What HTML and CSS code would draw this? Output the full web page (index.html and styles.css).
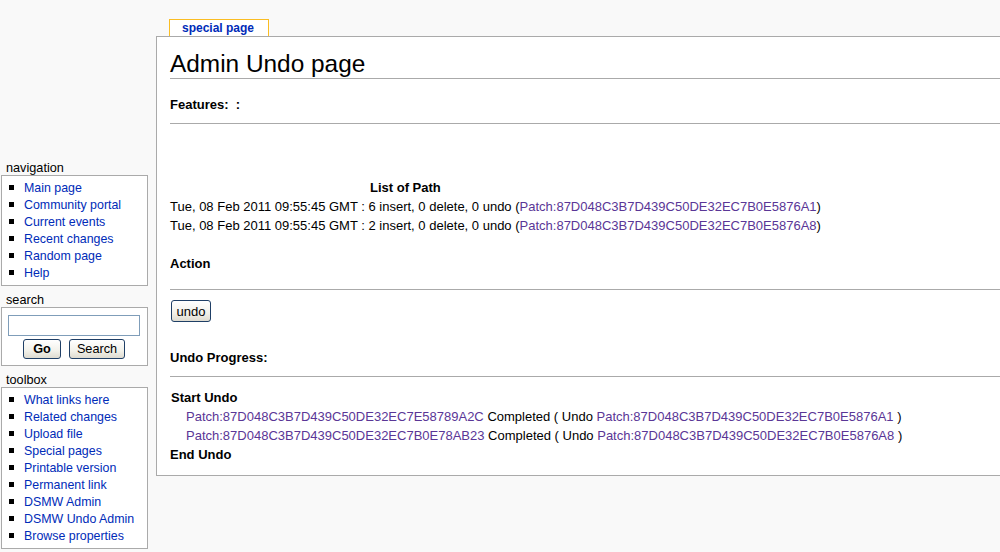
FILE: index.html
```html
<!DOCTYPE html>
<html>
<head>
<meta charset="utf-8">
<title>Admin Undo page</title>
<link rel="stylesheet" href="styles.css">
</head>
<body>
<div class="page">
  <div class="sidebar">
    <div class="portlet">
      <h5>navigation</h5>
      <div class="pbody">
        <ul>
          <li><a href="#">Main page</a></li>
          <li><a href="#">Community portal</a></li>
          <li><a href="#">Current events</a></li>
          <li><a href="#">Recent changes</a></li>
          <li><a href="#">Random page</a></li>
          <li><a href="#">Help</a></li>
        </ul>
      </div>
    </div>
    <div class="portlet">
      <h5>search</h5>
      <div class="pbody search">
        <input class="search-input" type="text">
        <div class="search-buttons">
          <button class="btn btn-go">Go</button>
          <button class="btn btn-search">Search</button>
        </div>
      </div>
    </div>
    <div class="portlet">
      <h5>toolbox</h5>
      <div class="pbody">
        <ul>
          <li><a href="#">What links here</a></li>
          <li><a href="#">Related changes</a></li>
          <li><a href="#">Upload file</a></li>
          <li><a href="#">Special pages</a></li>
          <li><a href="#">Printable version</a></li>
          <li><a href="#">Permanent link</a></li>
          <li><a href="#">DSMW Admin</a></li>
          <li><a href="#">DSMW Undo Admin</a></li>
          <li><a href="#">Browse properties</a></li>
        </ul>
      </div>
    </div>
  </div>
  <div class="main">
    <div class="tabs"><a class="tab" href="#">special page</a></div>
    <div class="content">
      <h1 class="title">Admin Undo page</h1>
      <div class="features">Features:&nbsp; :</div>
      <div class="rule rule-features"></div>
      <div class="list-caption">List of Path</div>
      <div class="row">Tue, 08 Feb 2011 09:55:45 GMT : 6 insert, 0 delete, 0 undo (<a class="v" href="#">Patch:87D048C3B7D439C50DE32EC7B0E5876A1</a>)</div>
      <div class="row">Tue, 08 Feb 2011 09:55:45 GMT : 2 insert, 0 delete, 0 undo (<a class="v" href="#">Patch:87D048C3B7D439C50DE32EC7B0E5876A8</a>)</div>
      <div class="section action">Action</div>
      <div class="rule rule-action"></div>
      <button class="btn undo-btn">undo</button>
      <div class="section progress">Undo Progress:</div>
      <div class="rule rule-progress"></div>
      <div class="start">Start Undo</div>
      <div class="item"><a class="v" href="#">Patch:87D048C3B7D439C50DE32EC7E58789A2C</a> Completed ( Undo <a class="v" href="#">Patch:87D048C3B7D439C50DE32EC7B0E5876A1</a> )</div>
      <div class="item"><a class="v" href="#">Patch:87D048C3B7D439C50DE32EC7B0E78AB23</a> Completed ( Undo <a class="v" href="#">Patch:87D048C3B7D439C50DE32EC7B0E5876A8</a> )</div>
      <div class="end">End Undo</div>
    </div>
  </div>
</div>
</body>
</html>
```

FILE: styles.css
```css
html, body {
  margin: 0;
  padding: 0;
  background: #f9f9f9;
  overflow: hidden;
}
body {
  font-family: "Liberation Sans", Arial, sans-serif;
  font-size: 12.7px;
  color: #000;
}
a {
  color: #002bb8;
  text-decoration: none;
}
a.v {
  color: #5a3696;
}
.page {
  display: flex;
  align-items: flex-start;
  width: 1000px;
}
.sidebar {
  width: 156px;
  flex: none;
  padding-top: 160px;
  font-size: 12.4px;
}
.portlet {
  margin: 0 0 6px 1px;
  width: 147px;
}
.portlet h5 {
  margin: 0;
  padding: 1px 0 0 5px;
  font-size: 12.7px;
  font-weight: normal;
  line-height: 15px;
  height: 14px;
  color: #000;
}
.pbody {
  background: #fff;
  border: 1px solid #aaa;
  box-sizing: border-box;
}
.pbody ul {
  list-style: none;
  margin: 0;
  padding: 4px 0 3px 0;
}
.pbody li {
  line-height: 17px;
  white-space: nowrap;
}
.pbody li::before {
  content: "";
  display: inline-block;
  width: 5px;
  height: 5px;
  background: #000;
  margin: 0 10px 0 7px;
  vertical-align: 2px;
}
.search {
  padding: 7px 0 6px 6px;
}
.search-input {
  display: block;
  box-sizing: border-box;
  width: 132px;
  height: 21px;
  margin: 0;
  border: 1px solid #7f9db9;
  background: #fff;
  padding: 0 2px;
}
.search-buttons {
  display: flex;
  gap: 8px;
  margin-top: 3px;
  padding-left: 15px;
}
.btn {
  box-sizing: border-box;
  font-family: "Liberation Sans", Arial, sans-serif;
  font-size: 12.7px;
  color: #000;
  border: 1px solid #1f3f66;
  border-radius: 3px;
  background: linear-gradient(#ffffff, #f2f1ea 60%, #dedbd0);
  padding: 0;
  margin: 0;
  cursor: pointer;
}
.btn-go {
  width: 38px;
  height: 20px;
  font-weight: bold;
}
.btn-search {
  width: 56px;
  height: 20px;
}
.main {
  flex: 1;
  padding-top: 19px;
}
.tabs {
  display: flex;
  padding-left: 13px;
}
.tab {
  display: block;
  border: 1px solid #fabd23;
  border-bottom: none;
  background: #fff;
  color: #002bb8;
  font-size: 12px;
  font-weight: bold;
  line-height: 16px;
  padding: 0 14px 0 12px;
}
.content {
  background: #fff;
  border: 1px solid #aaa;
  border-right: none;
  padding: 13px 0 11px 13px;
  font-size: 13px;
  line-height: 19px;
  white-space: nowrap;
}
.title {
  margin: 0;
  font-size: 24.4px;
  font-weight: normal;
  line-height: 28px;
  border-bottom: 1px solid #aaa;
}
.features {
  margin-top: 16px;
  font-weight: bold;
}
.rule {
  height: 1px;
  background: #aaa;
}
.rule-features {
  margin-top: 9px;
}
.list-caption {
  margin-top: 54px;
  padding-left: 200px;
  font-weight: bold;
}
.section {
  font-weight: bold;
}
.action {
  margin-top: 19px;
}
.rule-action {
  margin-top: 16px;
}
.undo-btn {
  display: block;
  margin: 10px 0 0 1px;
  width: 40px;
  height: 22px;
  font-size: 13px;
}
.progress {
  margin-top: 26px;
}
.rule-progress {
  margin-top: 9px;
}
.start {
  margin-top: 11px;
  padding-left: 1px;
  font-weight: bold;
}
.item {
  padding-left: 16px;
}
.end {
  font-weight: bold;
}
```
